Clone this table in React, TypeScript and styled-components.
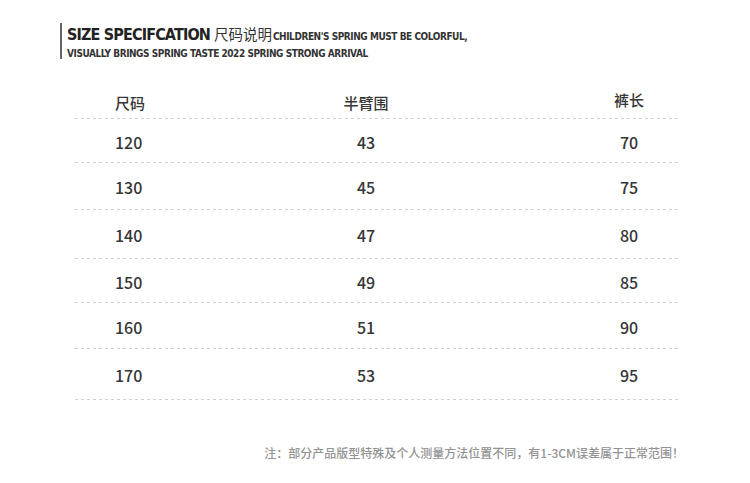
import React from "react";
import styled, { createGlobalStyle } from "styled-components";

const GlobalStyle = createGlobalStyle`
  html, body { margin: 0; padding: 0; background: #ffffff; }
  body { width: 750px; height: 483px; overflow: hidden; }
`;

const Page = styled.main`
  width: 750px;
  height: 483px;
  box-sizing: border-box;
  padding-top: 23px;
  display: flex;
  flex-direction: column;
  font-family: "Noto Sans CJK SC", "Noto Sans", sans-serif;
`;

const TitleBlock = styled.header`
  margin-left: 60px;
  padding: 2px 0 0 5px;
  border-left: 2px solid #666666;
  display: flex;
  flex-direction: column;
`;

const TitleLine = styled.div`
  display: flex;
  align-items: baseline;
  line-height: 17px;
  white-space: nowrap;
`;

const TitleMain = styled.span`
  font-family: "DejaVu Sans Condensed", "Liberation Sans", sans-serif;
  font-weight: 700;
  font-size: 16px;
  letter-spacing: -0.85px;
  color: #222222;
  margin-right: 4px;
`;

const TitleCn = styled.span`
  font-family: "Noto Sans CJK SC", sans-serif;
  font-weight: 400;
  font-size: 14.5px;
  color: #333333;
  margin-right: 1px;
`;

const Tagline = styled.span<{ $block?: boolean }>`
  display: ${(p) => (p.$block ? "block" : "inline")};
  font-family: "DejaVu Sans Condensed", "Liberation Sans", sans-serif;
  font-weight: 700;
  font-size: 10px;
  letter-spacing: -0.45px;
  line-height: 11px;
  color: #333333;
  white-space: nowrap;
`;

const SubLine = styled.div`
  margin-top: 5px;
`;

const Table = styled.section`
  margin: 27px 0 0 75px;
  width: 605px;
  display: flex;
  flex-direction: column;
`;

const dotted = `
  background-image: repeating-linear-gradient(to right, #d2d2d2 0 3px, transparent 3px 6px);
  background-size: 100% 1px;
  background-position: left bottom;
  background-repeat: no-repeat;
`;

const HeadRow = styled.div`
  display: grid;
  grid-template-columns: 91px 400px 1fr;
  padding: 7px 0 6px;
  ${dotted}
`;

const Row = styled.div<{ $h: number }>`
  display: grid;
  grid-template-columns: 91px 400px 1fr;
  align-items: center;
  box-sizing: border-box;
  height: ${(p) => p.$h}px;
  padding-top: 1px;
  ${dotted}
`;

const Cell = styled.div<{ $col: 0 | 1 | 2; $head?: boolean }>`
  font-family: "Noto Sans CJK SC", sans-serif;
  font-size: ${(p) => (p.$head ? "15px" : "16px")};
  font-weight: 500;
  line-height: 20px;
  color: #363636;
  text-align: ${(p) => (p.$col === 0 ? "left" : "center")};
  padding-left: ${(p) => (p.$col === 0 ? "40px" : p.$col === 2 ? "12px" : "0")};
  ${(p) => (p.$head && p.$col === 2 ? "transform: translateY(-3px);" : "")}
`;

const Note = styled.p`
  margin: 44px 0 0;
  width: 684px;
  text-align: right;
  font-family: "Noto Sans CJK SC", sans-serif;
  font-size: 12px;
  font-weight: 500;
  line-height: 17px;
  color: #939393;
  white-space: nowrap;
`;

const rows = [
  { size: "120", hip: "43", len: "70", h: 44 },
  { size: "130", hip: "45", len: "75", h: 47 },
  { size: "140", hip: "47", len: "80", h: 49 },
  { size: "150", hip: "49", len: "85", h: 44 },
  { size: "160", hip: "51", len: "90", h: 46 },
  { size: "170", hip: "53", len: "95", h: 51 },
];

export default function App() {
  return (
    <>
      <GlobalStyle />
      <Page>
        <TitleBlock>
          <TitleLine>
            <TitleMain>SIZE SPECIFCATION</TitleMain>
            <TitleCn>尺码说明</TitleCn>
            <Tagline>CHILDREN'S SPRING MUST BE COLORFUL,</Tagline>
          </TitleLine>
          <SubLine>
            <Tagline $block>VISUALLY BRINGS SPRING TASTE 2022 SPRING STRONG ARRIVAL</Tagline>
          </SubLine>
        </TitleBlock>
        <Table>
          <HeadRow>
            <Cell $col={0} $head>尺码</Cell>
            <Cell $col={1} $head>半臂围</Cell>
            <Cell $col={2} $head>裤长</Cell>
          </HeadRow>
          {rows.map((r) => (
            <Row key={r.size} $h={r.h}>
              <Cell $col={0}>{r.size}</Cell>
              <Cell $col={1}>{r.hip}</Cell>
              <Cell $col={2}>{r.len}</Cell>
            </Row>
          ))}
        </Table>
        <Note>注：部分产品版型特殊及个人测量方法位置不同，有1-3CM误差属于正常范围！</Note>
      </Page>
    </>
  );
}
